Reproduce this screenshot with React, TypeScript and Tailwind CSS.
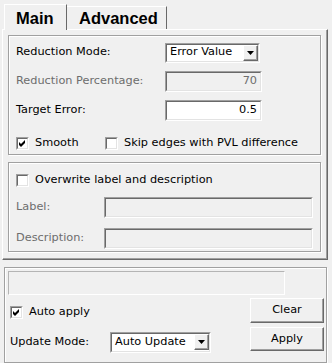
import React from "react";

const sunkenOuter =
  "border border-t-[#a0a0a0] border-l-[#a0a0a0] border-b-white border-r-white";
const sunkenInner =
  "border border-t-[#696969] border-l-[#696969] border-b-[#e3e3e3] border-r-[#e3e3e3]";
const raised =
  "border border-t-white border-l-white border-b-[#696969] border-r-[#696969] shadow-[inset_-1px_-1px_0_#a0a0a0]";
const groupBox =
  "border border-[#a0a0a0] shadow-[inset_1px_1px_0_#fff,1px_1px_0_#fff]";

const CheckBox = ({ checked }: { checked?: boolean }) => (
  <span className={`flex h-[13px] w-[13px] shrink-0 ${sunkenOuter}`}>
    <span className={`flex flex-1 items-center justify-center bg-white ${sunkenInner}`}>
      {checked && (
        <svg width="7" height="7" viewBox="0 0 7 7">
          <polygon points="0,2 2,4 6,0 6,3 2,7 0,5" fill="#000" />
        </svg>
      )}
    </span>
  </span>
);

const Field = ({
  value,
  disabled,
  className,
}: {
  value?: string;
  disabled?: boolean;
  className: string;
}) => (
  <div className={`flex ${sunkenOuter} ${className}`}>
    <div
      className={`flex flex-1 items-center justify-end pr-[3px] ${sunkenInner} ${
        disabled ? "bg-[#f0f0f0] text-[#6d6d6d]" : "bg-white text-black"
      }`}
    >
      {value}
    </div>
  </div>
);

const Combo = ({ value, className }: { value: string; className: string }) => (
  <div className={`flex ${sunkenOuter} ${className}`}>
    <div className={`flex flex-1 items-center bg-white pl-[3px] ${sunkenInner}`}>
      <span className="flex-1">{value}</span>
      <span className={`flex h-[16px] w-[15px] items-center justify-center bg-[#f0f0f0] ${raised}`}>
        <svg width="7" height="4" viewBox="0 0 7 4">
          <polygon points="0,0 7,0 3.5,4" fill="#000" />
        </svg>
      </span>
    </div>
  </div>
);

const Button = ({ label, className }: { label: string; className: string }) => (
  <div className={`flex w-[74px] items-center justify-center bg-[#f0f0f0] ${raised} ${className}`}>
    {label}
  </div>
);

export default function App() {
  return (
    <div className="h-[363px] w-[332px] overflow-hidden bg-[#f0f0f0] font-['DejaVu_Sans',sans-serif] text-[11.3px] text-black">
      {/* tabs */}
      <div className="flex h-[29px] items-end pl-[4px]">
        <div className="relative z-10 -mb-px flex h-[26px] w-[63px] items-start border-l border-t border-r border-l-white border-t-white border-r-[#696969] bg-[#f0f0f0] pl-[11px] pt-[4px] font-['Liberation_Sans',sans-serif] text-[16.5px] font-bold leading-[18px]">
          Main
        </div>
        <div className="flex h-[23px] w-[100px] items-start border-t border-r border-t-white border-r-[#696969] pl-[12px] pt-[2px] font-['Liberation_Sans',sans-serif] text-[16.5px] font-bold leading-[18px]">
          Advanced
        </div>
      </div>

      {/* tab pane */}
      <div className="ml-[2px] flex h-[231px] w-[326px] flex-col border border-t-white border-l-white border-b-[#696969] border-r-[#696969] px-[5px] pt-[5px] shadow-[inset_-1px_-1px_0_#a0a0a0]">
        <div className={`flex h-[120px] w-[313px] flex-col px-[7px] pt-[6px] ${groupBox}`}>
          <div className="flex h-[21px] items-center">
            <span className="w-[149px]">Reduction Mode:</span>
            <Combo value="Error Value" className="h-[20px] w-[95px]" />
          </div>
          <div className="mt-[8px] flex h-[21px] items-center">
            <span className="w-[149px] text-[#6d6d6d]">Reduction Percentage:</span>
            <Field value="70" disabled className="h-[21px] w-[97px]" />
          </div>
          <div className="mt-[8px] flex h-[21px] items-center">
            <span className="w-[149px]">Target Error:</span>
            <Field value="0.5" className="h-[21px] w-[97px]" />
          </div>
          <div className="mt-[15px] flex h-[14px] items-center">
            <CheckBox checked />
            <span className="ml-[6px] w-[70px]">Smooth</span>
            <CheckBox />
            <span className="ml-[6px]">Skip edges with PVL difference</span>
          </div>
        </div>

        <div className={`mt-[7px] flex h-[90px] w-[313px] flex-col px-[7px] pt-[10px] ${groupBox}`}>
          <div className="flex h-[14px] items-center">
            <CheckBox />
            <span className="ml-[6px]">Overwrite label and description</span>
          </div>
          <div className="mt-[10px] flex h-[21px] items-center">
            <span className="w-[89px] text-[#6d6d6d]">Label:</span>
            <Field disabled className="h-[21px] w-[211px]" />
          </div>
          <div className="mt-[10px] flex h-[21px] items-center">
            <span className="w-[89px] text-[#6d6d6d]">Description:</span>
            <Field disabled className="h-[21px] w-[211px]" />
          </div>
        </div>
      </div>

      {/* bottom group */}
      <div className={`ml-[4px] mt-[7px] flex h-[96px] w-[323px] flex-col pl-[3px] pr-[2px] pt-[3px] ${groupBox}`}>
        <div className="h-[24px] w-[277px] border border-t-[#b4b4b4] border-l-[#b4b4b4] border-b-white border-r-white" />
        <div className="mt-[3px] flex">
          <div className="flex flex-1 flex-col pl-[2px]">
            <div className="mt-[7px] flex h-[14px] items-center">
              <CheckBox checked />
              <span className="ml-[6px]">Auto apply</span>
            </div>
            <div className="mt-[13px] flex h-[20px] items-center">
              <span className="w-[100px]">Update Mode:</span>
              <Combo value="Auto Update" className="h-[21px] w-[101px]" />
            </div>
          </div>
          <div className="flex flex-col gap-[4px]">
            <Button label="Clear" className="h-[25px]" />
            <Button label="Apply" className="h-[24px]" />
          </div>
        </div>
      </div>
    </div>
  );
}
